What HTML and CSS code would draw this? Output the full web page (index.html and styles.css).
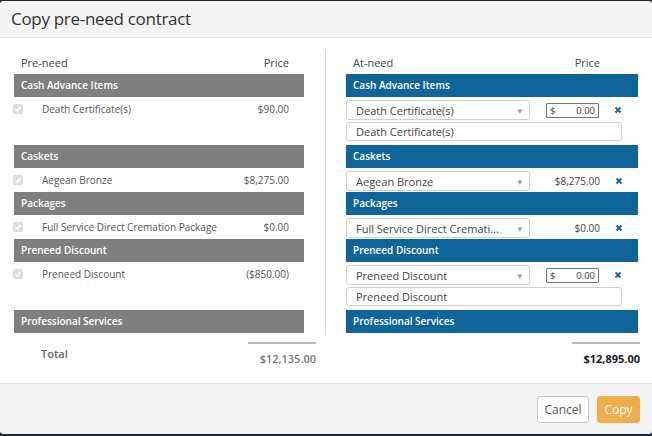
FILE: index.html
```html
<!DOCTYPE html>
<html>
<head>
<meta charset="utf-8">
<link rel="stylesheet" href="styles.css">
</head>
<body>
<div class="modal">
  <div class="modal-header"><h1>Copy pre-need contract</h1></div>
  <div class="modal-body">
    <div class="col left">
      <div class="col-head"><span>Pre-need</span><span>Price</span></div>
      <div class="bar">Cash Advance Items</div>
      <div class="row"><span class="chk"><svg width="10" height="10" viewBox="0 0 10 10"><path d="M2.5 5.2 L4.2 7 L7.6 3" fill="none" stroke="#fff" stroke-width="1.4"/></svg></span><span class="name">Death Certificate(s)</span><span class="price">$90.00</span></div>
      <div class="row"></div>
      <div class="bar">Caskets</div>
      <div class="row"><span class="chk"><svg width="10" height="10" viewBox="0 0 10 10"><path d="M2.5 5.2 L4.2 7 L7.6 3" fill="none" stroke="#fff" stroke-width="1.4"/></svg></span><span class="name">Aegean Bronze</span><span class="price">$8,275.00</span></div>
      <div class="bar">Packages</div>
      <div class="row"><span class="chk"><svg width="10" height="10" viewBox="0 0 10 10"><path d="M2.5 5.2 L4.2 7 L7.6 3" fill="none" stroke="#fff" stroke-width="1.4"/></svg></span><span class="name">Full Service Direct Cremation Package</span><span class="price">$0.00</span></div>
      <div class="bar">Preneed Discount</div>
      <div class="row"><span class="chk"><svg width="10" height="10" viewBox="0 0 10 10"><path d="M2.5 5.2 L4.2 7 L7.6 3" fill="none" stroke="#fff" stroke-width="1.4"/></svg></span><span class="name">Preneed Discount</span><span class="price">($850.00)</span></div>
      <div class="row"></div>
      <div class="bar">Professional Services</div>
      <div class="total">
        <span class="total-label">Total</span>
        <span class="total-amt">$12,135.00</span>
      </div>
    </div>
    <div class="divider"></div>
    <div class="col right">
      <div class="col-head"><span>At-need</span><span>Price</span></div>
      <div class="bar blue">Cash Advance Items</div>
      <div class="row sel-row">
        <div class="select"><span>Death Certificate(s)</span><span class="caret">▾</span></div>
        <div class="money"><span>$</span><span>0.00</span></div>
        <span class="x"><svg width="8" height="8" viewBox="0 0 8 8"><path d="M1.5 1.5 L6.5 6.5 M6.5 1.5 L1.5 6.5" stroke="#1a68a2" stroke-width="2"/></svg></span>
      </div>
      <div class="row text-row"><div class="text-input">Death Certificate(s)</div></div>
      <div class="bar blue">Caskets</div>
      <div class="row sel-row">
        <div class="select"><span>Aegean Bronze</span><span class="caret">▾</span></div>
        <div class="price-cell">$8,275.00</div>
        <span class="x"><svg width="8" height="8" viewBox="0 0 8 8"><path d="M1.5 1.5 L6.5 6.5 M6.5 1.5 L1.5 6.5" stroke="#1a68a2" stroke-width="2"/></svg></span>
      </div>
      <div class="bar blue">Packages</div>
      <div class="row sel-row">
        <div class="select"><span>Full Service Direct Cremati...</span><span class="caret">▾</span></div>
        <div class="price-cell">$0.00</div>
        <span class="x"><svg width="8" height="8" viewBox="0 0 8 8"><path d="M1.5 1.5 L6.5 6.5 M6.5 1.5 L1.5 6.5" stroke="#1a68a2" stroke-width="2"/></svg></span>
      </div>
      <div class="bar blue">Preneed Discount</div>
      <div class="row sel-row">
        <div class="select"><span>Preneed Discount</span><span class="caret">▾</span></div>
        <div class="money"><span>$</span><span>0.00</span></div>
        <span class="x"><svg width="8" height="8" viewBox="0 0 8 8"><path d="M1.5 1.5 L6.5 6.5 M6.5 1.5 L1.5 6.5" stroke="#1a68a2" stroke-width="2"/></svg></span>
      </div>
      <div class="row text-row"><div class="text-input">Preneed Discount</div></div>
      <div class="bar blue">Professional Services</div>
      <div class="total">
        <span class="total-label"></span>
        <span class="total-amt strong">$12,895.00</span>
      </div>
    </div>
  </div>
  <div class="modal-footer">
    <button class="btn cancel">Cancel</button>
    <button class="btn copy">Copy</button>
  </div>
</div>
</body>
</html>
```
FILE: styles.css
```css
* { box-sizing: border-box; }
html, body { margin: 0; padding: 0; }
body {
  background: #1d2a33;
  font-family: "Open Sans", "DejaVu Sans", sans-serif;
  width: 652px;
  height: 436px;
  overflow: hidden;
}
.modal {
  margin-top: 1px;
  height: 433px;
  background: #fff;
  border-radius: 4px;
  display: flex;
  flex-direction: column;
  overflow: hidden;
}
.modal-header {
  height: 37px;
  background: #f4f4f4;
  border-bottom: 1px solid #e3e3e3;
  padding-left: 11px;
  display: flex;
  align-items: center;
}
.modal-header h1 {
  margin: 0;
  font-size: 17px;
  letter-spacing: -0.3px;
  font-weight: 400;
  color: #333;
  line-height: 24px;
}
.modal-body {
  flex: 1;
  display: flex;
  padding: 12px 12px 0 14px;
}
.col.left { width: 302px; }
.col.right { width: 294px; }
.divider {
  width: 1px;
  height: 285px;
  background: #dcdcdc;
  margin-left: 9px;
  margin-right: 20px;
}
.col-head {
  height: 24px;
  display: flex;
  justify-content: space-between;
  align-items: center;
  font-size: 11px;
  color: #444;
  padding: 0 15px 0 7px;
}
.left .col-head { width: 290px; }
.right .col-head { width: 292px; padding-right: 38px; }
.bar {
  height: 23px;
  line-height: 23px;
  background: #7f7f7f;
  color: #fff;
  font-size: 10px;
  font-weight: 600;
  padding-left: 7px;
  width: 290px;
}
.bar.blue { background: #0f6599; width: 292px; }
.row {
  height: 24px;
  display: flex;
  align-items: center;
}
.left .row {
  width: 290px;
  padding-right: 15px;
  font-size: 10px;
  color: #555;
}
.chk {
  width: 10px;
  height: 10px;
  background: #dedede;
  border-radius: 2px;
  margin-left: -1px;
  display: flex;
}
.left .name { margin-left: 19px; flex: 1; }
.left .price { text-align: right; }
.sel-row { padding-top: 2px; }
.select {
  width: 184px;
  height: 20px;
  border: 1px solid #cfcfcf;
  border-radius: 3px;
  display: flex;
  align-items: center;
  justify-content: space-between;
  padding: 0 7px 0 9px;
  font-size: 11px;
  color: #444;
  white-space: nowrap;
}
.caret { font-size: 9px; color: #999; }
.money {
  margin-left: 16px;
  width: 53px;
  height: 15px;
  border: 1px solid #777;
  border-radius: 1px;
  display: flex;
  justify-content: space-between;
  align-items: center;
  padding: 0 3px 0 3px;
  font-size: 9.5px;
  color: #444;
}
.price-cell {
  margin-left: 16px;
  width: 54px;
  text-align: right;
  font-size: 10px;
  color: #444;
}
.x {
  margin-left: 15px;
  display: flex;
}
.text-row { align-items: flex-start; }
.text-input {
  margin-top: 1px;
  width: 276px;
  height: 19px;
  border: 1px solid #cfcfcf;
  border-radius: 3px;
  padding-left: 9px;
  font-size: 11px;
  line-height: 17px;
  color: #444;
}
.total {
  margin-top: 9px;
  display: flex;
  justify-content: space-between;
  align-items: flex-start;
}
.total-label {
  padding-left: 27px;
  padding-top: 4px;
  font-size: 11px;
  line-height: 16px;
  font-weight: 600;
  color: #666;
}
.total-amt {
  width: 68px;
  border-top: 2px solid #bbb;
  padding-top: 7px;
  text-align: right;
  font-size: 11px;
  line-height: 16px;
  font-weight: 600;
  color: #777;
}
.total-amt.strong { color: #222; font-weight: 700; }
.modal-footer {
  height: 51px;
  background: #f4f4f4;
  border-top: 1px solid #e3e3e3;
  display: flex;
  justify-content: flex-end;
  align-items: flex-start;
  gap: 8px;
  padding: 12px 12px 0 0;
}
.btn {
  height: 27px;
  font-family: "Open Sans", sans-serif;
  font-size: 12px;
  border-radius: 3px;
  padding: 0;
}
.cancel {
  width: 52px;
  background: #fff;
  border: 1px solid #c8c8c8;
  color: #555;
}
.copy {
  width: 43px;
  background: #f0ad4e;
  border: 1px solid #f0ad4e;
  color: #fff;
}
```
